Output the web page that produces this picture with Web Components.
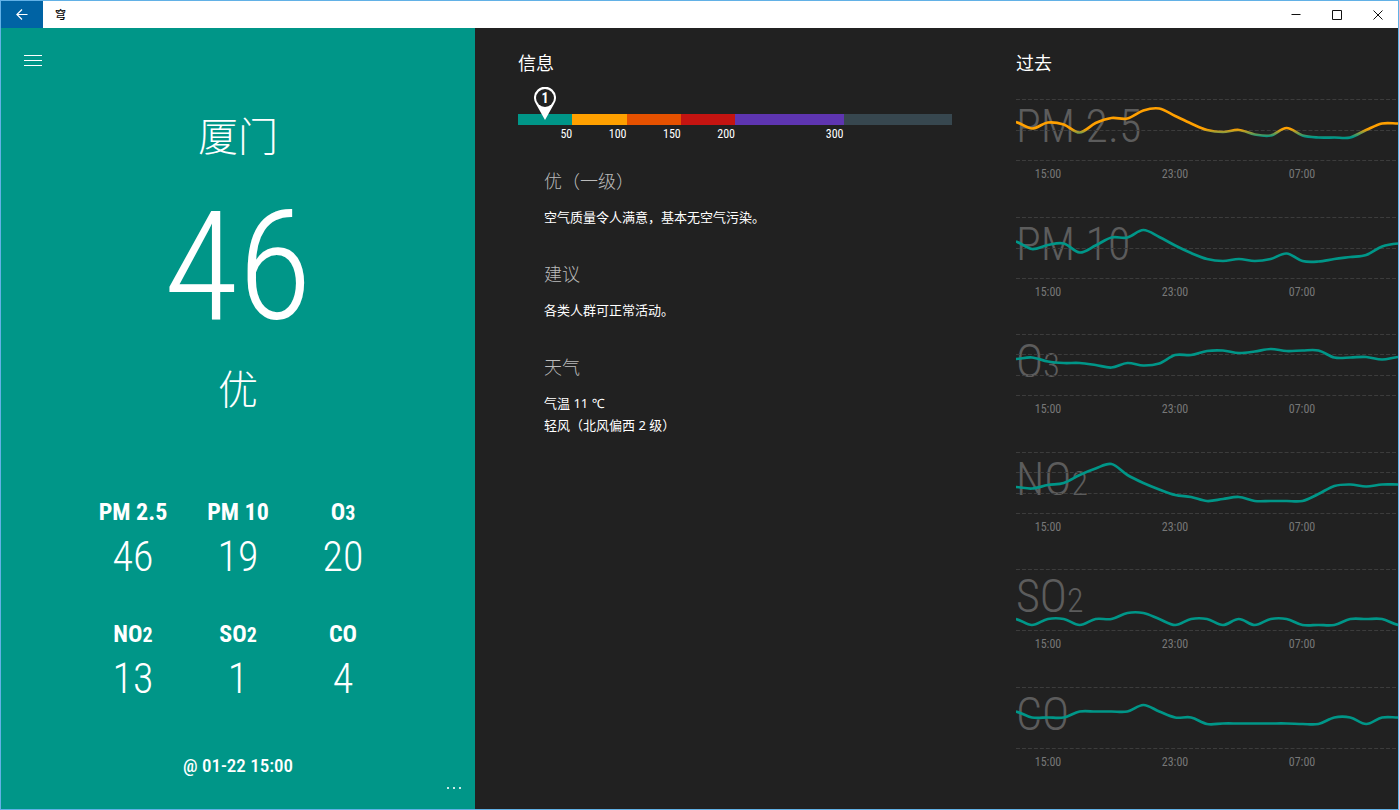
<!DOCTYPE html>
<html lang="zh-CN">
<head>
<meta charset="utf-8">
<title>穹</title>
<style>
html,body{margin:0;height:100%}
body{background:#212121;font-family:"Noto Sans","Noto Sans CJK SC",sans-serif;
--digits:"Roboto Condensed","Liberation Sans Narrow",Roboto,"Noto Sans CJK SC",sans-serif;
--thin:"Roboto Condensed",Roboto,sans-serif;
--cjk:"Noto Sans CJK SC",sans-serif}
</style>
</head>
<body>
<air-app></air-app>
<script>
const define = (name, html) => customElements.define(name, class extends HTMLElement {
  connectedCallback() {
    if (this.shadowRoot) return;
    const root = this.attachShadow({ mode: 'open' });
    root.innerHTML = typeof html === 'function' ? html(this) : html;
  }
});

define('title-bar', `
<style>
:host{display:flex;height:27px;background:#fff;color:#000;align-items:stretch}
button{border:0;padding:0;background:none;display:grid;place-items:center;width:41px}
.back{background:#0063a4;width:42px}
h1{margin:0 auto 0 0;padding-left:12px;font:500 11px/26px var(--cjk)}
svg{fill:none;stroke:#111;stroke-width:1}
.back svg{stroke:#fff;stroke-width:1.2}
</style>
<button class="back" aria-label="返回"><svg width="12" height="12"><path d="M11.500 5.500H.8M6 .5L.9 5.500L6 10.500"/></svg></button>
<h1>穹</h1>
<button aria-label="最小化"><svg width="10" height="10"><path d="M.5 4.500H9.500"/></svg></button>
<button aria-label="最大化"><svg width="10" height="10"><path d="M.5 .5H9.500V9.500H.5Z"/></svg></button>
<button aria-label="关闭"><svg width="10" height="10"><path d="M.5 .5L9.500 9.500M9.500 .5L.5 9.500"/></svg></button>`);

define('pollutant-value', el => `
<style>
:host{display:block;text-align:center;font-family:var(--digits);color:#fff}
h3{margin:0;font-size:24px;line-height:32px;height:32px;font-weight:700}
p{margin:4px 0 0;font:300 42px/50px var(--thin)}
::slotted(small){font-size:20px;line-height:1}
</style>
<h3><slot></slot></h3><p>${el.getAttribute('value')}</p>`);

define('current-panel', `
<style>
:host{display:flex;flex-direction:column;background:#009688;color:#fff;text-align:center}
button{border:0;padding:0;background:none;color:#fff;display:grid;place-items:center}
.menu{width:48px;height:48px;margin:8px 8px 22px}
h2,.level,.aqi,.time{margin:0}
h2,.level{font:300 40px/56px var(--cjk)}
.aqi{font:300 152px/120px var(--thin);margin:45px 0 32px}
.grid{display:grid;grid-template-columns:repeat(3,105px);justify-content:center;row-gap:36px;margin-top:81px}
.time{font:500 19px/24px var(--digits);margin-top:50px}
.more{align-self:flex-end;width:42px;height:20px}
</style>
<button class="menu" aria-label="菜单"><svg width="18" height="11" stroke="#fff"><path d="M0 .5H18M0 5.500H18M0 10.500H18"/></svg></button>
<h2>厦门</h2>
<p class="aqi">46</p>
<p class="level">优</p>
<div class="grid">
<pollutant-value value="46">PM 2.5</pollutant-value>
<pollutant-value value="19">PM 10</pollutant-value>
<pollutant-value value="20">O<small>3</small></pollutant-value>
<pollutant-value value="13">NO<small>2</small></pollutant-value>
<pollutant-value value="1">SO<small>2</small></pollutant-value>
<pollutant-value value="4">CO</pollutant-value>
</div>
<p class="time">@ 01-22 15:00</p>
<button class="more" aria-label="更多"><svg width="14" height="2" fill="#fff" fill-opacity=".8"><path d="M0 0H2V2H0ZM6 0H8V2H6ZM12 0H14V2H12Z"/></svg></button>`);

define('aqi-scale', `
<style>
:host{display:grid;grid-template-columns:1fr 1fr 1fr 1fr 2fr 2fr;font:12px/16px var(--digits);color:#fff;text-align:right}
i{display:block;height:11px;background:var(--c);margin-bottom:1px;position:relative}
.pin{position:absolute;left:50%;bottom:5px;margin-left:-11px;width:22px;height:33px}
</style>
<div style="--c:#009688"><i><svg class="pin" viewBox="0 0 22 33"><path d="M11 33L2 17A11 11 0 1 1 20 17Z" fill="#fff"/><circle cx="11" cy="11" r="9" fill="#212121"/><text x="11" y="16" text-anchor="middle" font-size="14" font-weight="700" font-style="normal" fill="#fff">1</text></svg></i>50</div>
<div style="--c:#ffa000"><i></i>100</div>
<div style="--c:#e65100"><i></i>150</div>
<div style="--c:#c41411"><i></i>200</div>
<div style="--c:#5e35b1"><i></i>300</div>
<div style="--c:#37474f"><i></i></div>`);

define('info-section', el => `
<style>
:host{display:block;color:#fff}
h3{margin:0 0 13px;font:300 18px/26px var(--cjk);color:#bbb}
div{font:400 13px/22px "Noto Sans","Noto Sans CJK SC",sans-serif}
</style>
<h3>${el.getAttribute('heading')}</h3><div><slot></slot></div>`);

define('info-panel', `
<style>
:host{display:block;padding:20px 64px 0 43px;color:#fff}
h2{margin:0;font:400 18px/28px var(--cjk)}
aqi-scale{margin:38px 0 0}
.list{display:grid;gap:32px;padding:25px 26px 0}
</style>
<h2>信息</h2>
<aqi-scale></aqi-scale>
<div class="list">
<info-section heading="优（一级）">空气质量令人满意，基本无空气污染。</info-section>
<info-section heading="建议">各类人群可正常活动。</info-section>
<info-section heading="天气">气温 11 ℃<br>轻风（北风偏西 2 级）</info-section>
</div>`);

/* Smooth line through evenly spaced samples */
const STEP = 16;
function curve(v) {
  let d = `M0 ${v[0]}`;
  for (let i = 0; i < v.length - 1; i++) {
    const a = v[Math.max(0, i - 1)], b = v[i], c = v[i + 1], e = v[Math.min(v.length - 1, i + 2)];
    const x = i * STEP;
    d += `C${x + STEP / 3} ${b + (c - a) / 6} ${x + STEP * 2 / 3} ${c - (e - b) / 6} ${x + STEP} ${c}`;
  }
  return d;
}
define('history-chart', el => {
  const values = el.getAttribute('values').split(' ').map(Number);
  const lines = [0, ...(el.getAttribute('lines') || '').split(' ').filter(Boolean).map(Number), 61];
  return `
<style>
:host{display:block;min-width:0}
.plot{display:grid;height:61px}
.plot>*{grid-area:1/1;min-width:0}
.name{margin:0;font:300 46px/54px var(--thin);color:#5c5c5c;white-space:nowrap}
::slotted(small){font-size:34px;line-height:1}
svg{width:100%;height:61px;overflow:visible;fill:none;z-index:1}
.times{display:grid;grid-template-columns:64fr 190fr 64fr 64fr;font:12px/16px var(--digits);color:#777;padding-top:6px;text-align:center}
</style>
<div class="plot"><h3 class="name"><slot></slot></h3>
<svg viewBox="0 0 384 61" preserveAspectRatio="none"><defs><linearGradient id="g" gradientUnits="userSpaceOnUse" x1="0" x2="0" y1="30" y2="38"><stop stop-color="#ffa000"/><stop offset="1" stop-color="#009688"/></linearGradient></defs>
${lines.map(y => `<path d="M0 ${y + .5}H384" stroke="#3c3c3c" stroke-dasharray="4 2"/>`).join('')}
<path d="${curve(values)}" stroke="${el.hasAttribute('mixed') ? 'url(#g)' : '#009688'}" stroke-width="2.700"/></svg></div>
<div class="times"><span>15:00</span><span>23:00</span><span>07:00</span></div>`;
});

define('history-panel', `
<style>
:host{display:flex;flex-direction:column;padding-top:20px;color:#fff;min-width:0;overflow:hidden}
h2{margin:0 0 23px;font:400 18px/28px var(--cjk)}
.charts{flex:1;display:grid;grid-template-rows:repeat(6,1fr);padding-bottom:5px}
</style>
<h2>过去</h2>
<div class="charts">
<history-chart mixed lines="31" values="23 29.500 23.500 25.500 33.500 24 19 19.500 11.500 9.500 17 24.500 31 33 31 35.500 36.500 29 36.500 38.500 38.500 38.500 31 24.500 24.500">PM 2.5</history-chart>
<history-chart lines="31" values="24.500 32 28 26.500 35.500 28.500 20.500 20.500 13 20 28.500 36 42 44 42 44 42 36.500 44 44.500 42 40 38 29.500 26.500">PM 10</history-chart>
<history-chart lines="20 41" values="25 23.500 27.500 29 29 31 33.500 29 31.500 29.500 21 21 17 16.500 19 17.500 15 17 16.500 16.500 23.500 23.500 23 25.500 23">O<small>3</small></history-chart>
<history-chart lines="20 41" values="35 36.500 33 31 23 16.500 12 23 31 37.500 43 45 49 47 45 49 49 49 49 42 34 32.500 34.500 32.500 32.500">NO<small>2</small></history-chart>
<history-chart values="50 56 50 50 56 50 50 44 44 50 56 50 50 56 50 56 50 50 56 56 56 50 50 50 56">SO<small>2</small></history-chart>
<history-chart values="24.500 30.500 30.500 30.500 24.500 24.500 24.500 24.500 18 24.500 30.500 30.500 37 36.500 36.500 36.500 36.500 36.500 37 37 30.500 30.500 37 30.500 30.500">CO</history-chart>
</div>`);

define('air-app', `
<style>
:host{display:flex;flex-direction:column;box-sizing:border-box;min-height:100vh;border:1px solid #62b1e6}
main{flex:1;display:grid;grid-template-columns:474fr 541fr 382fr}
</style>
<title-bar></title-bar>
<main><current-panel></current-panel><info-panel></info-panel><history-panel></history-panel></main>`);
</script>
</body>
</html>
